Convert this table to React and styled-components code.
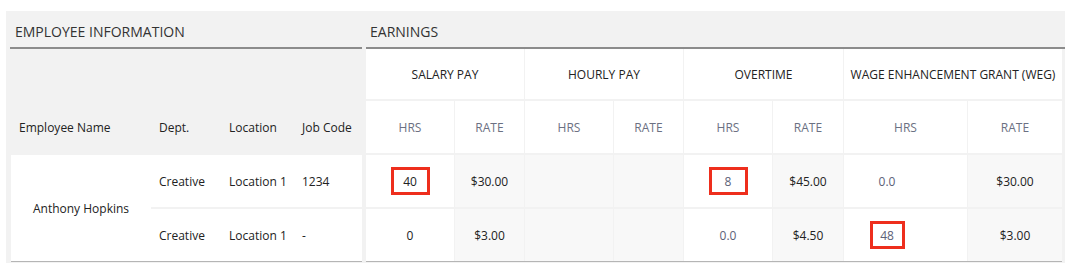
import React from 'react';
import styled, { createGlobalStyle } from 'styled-components';

const Global = createGlobalStyle`
  html, body { margin: 0; padding: 0; background: #ffffff; }
  body { font-family: "Open Sans", "Liberation Sans", sans-serif; font-size: 12px; }
`;

const Page = styled.div`
  padding: 11px 0 0 6px;
`;

const Panel = styled.div`
  display: flex;
  gap: 4px;
  padding-left: 4px;
  height: 252px;
  background: #f2f2f2;
`;

const Section = styled.section`
  display: flex;
  flex-direction: column;
  width: ${(p) => p.$width};
  flex: ${(p) => (p.$grow ? '1 1 auto' : '0 0 auto')};
`;

const Title = styled.div`
  box-sizing: border-box;
  height: 38px;
  padding: 11px 0 0 ${(p) => p.$pad}px;
  font-size: 14px;
  line-height: 19px;
  color: #333333;
  border-bottom: 2px solid #8c8c8c;
  white-space: nowrap;
`;

const InfoGrid = styled.div`
  display: grid;
  grid-template-columns: 140px 70px 73px 68px;
  grid-template-rows: 50px 52px 52px 52px;
  row-gap: 2px;
  margin-left: 1px;
  width: 351px;
  border-bottom: 1px solid #b5b5b5;
`;

const EarnGrid = styled.div`
  display: grid;
  grid-template-columns: 88px 69px 88px 69px 88px 70px 123px 94px;
  grid-template-rows: 50px 52px 52px 52px;
  column-gap: 1px;
  row-gap: 2px;
  width: 696px;
  border-bottom: 1px solid #b5b5b5;
`;

const Spacer = styled.div`
  grid-column: 1 / span 4;
`;

const Label = styled.div`
  display: flex;
  align-items: center;
  padding-left: 8px;
  color: #222222;
  white-space: nowrap;
`;

const InfoCell = styled.div`
  display: flex;
  align-items: center;
  padding-left: 8px;
  background: #ffffff;
  color: #222222;
  white-space: nowrap;
`;

const NameCell = styled.div`
  grid-row: span 2;
  display: flex;
  align-items: center;
  justify-content: center;
  background: #ffffff;
  color: #222222;
  white-space: nowrap;
`;

const GroupHead = styled.div`
  grid-column: span 2;
  display: flex;
  align-items: center;
  justify-content: center;
  background: #ffffff;
  color: #222222;
  white-space: nowrap;
`;

const SubHead = styled.div`
  display: flex;
  align-items: center;
  justify-content: center;
  background: #ffffff;
  color: #6b7082;
`;

const DataCell = styled.div`
  display: flex;
  align-items: center;
  justify-content: center;
  padding-right: ${(p) => p.$shift || 0}px;
  background: ${(p) => (p.$muted ? '#f8f8f8' : '#ffffff')};
  color: #222222;
`;

const Value = styled.span`
  box-sizing: border-box;
  display: inline-flex;
  align-items: center;
  justify-content: center;
  width: ${(p) => p.$w || 39}px;
  height: 28px;
  color: ${(p) => (p.$input ? '#5c6177' : '#222222')};
  border: 3px solid ${(p) => (p.$flag ? '#ee2e1d' : 'transparent')};
`;

const groups = ['SALARY PAY', 'HOURLY PAY', 'OVERTIME', 'WAGE ENHANCEMENT GRANT (WEG)'];

const rows = [
  [
    { v: '40', flag: true },
    { v: '$30.00', muted: true },
    { v: '', muted: true },
    { v: '', muted: true },
    { v: '8', input: true, flag: true },
    { v: '$45.00', muted: true },
    { v: '0.0', input: true, shift: 37, w: 35 },
    { v: '$30.00', muted: true },
  ],
  [
    { v: '0' },
    { v: '$3.00', muted: true },
    { v: '', muted: true },
    { v: '', muted: true },
    { v: '0.0', input: true },
    { v: '$4.50', muted: true },
    { v: '48', input: true, flag: true, shift: 37, w: 35 },
    { v: '$3.00', muted: true },
  ],
];

export default function App() {
  return (
    <>
      <Global />
      <Page>
        <Panel>
          <Section $width="352px">
            <Title $pad={5}>EMPLOYEE INFORMATION</Title>
            <InfoGrid>
              <Spacer />
              <Label>Employee Name</Label>
              <Label>Dept.</Label>
              <Label>Location</Label>
              <Label>Job Code</Label>
              <NameCell>Anthony Hopkins</NameCell>
              <InfoCell>Creative</InfoCell>
              <InfoCell>Location 1</InfoCell>
              <InfoCell>1234</InfoCell>
              <InfoCell>Creative</InfoCell>
              <InfoCell>Location 1</InfoCell>
              <InfoCell>-</InfoCell>
            </InfoGrid>
          </Section>
          <Section $grow>
            <Title $pad={4}>EARNINGS</Title>
            <EarnGrid>
              {groups.map((g) => (
                <GroupHead key={g}>{g}</GroupHead>
              ))}
              {groups.flatMap((g) => [
                <SubHead key={g + 'h'}>HRS</SubHead>,
                <SubHead key={g + 'r'}>RATE</SubHead>,
              ])}
              {rows.flatMap((r, ri) =>
                r.map((c, ci) => (
                  <DataCell key={ri + '-' + ci} $muted={c.muted} $shift={c.shift}>
                    {c.v && (
                      <Value $input={c.input} $flag={c.flag} $w={c.w}>
                        {c.v}
                      </Value>
                    )}
                  </DataCell>
                ))
              )}
            </EarnGrid>
          </Section>
        </Panel>
      </Page>
    </>
  );
}
